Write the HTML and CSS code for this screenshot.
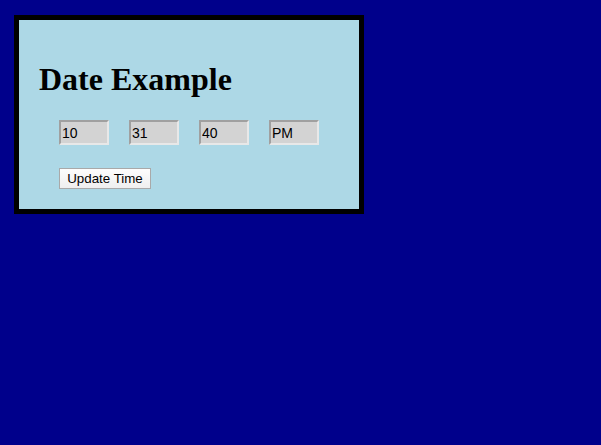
FILE: index.html
```html
<!DOCTYPE html>
<html>
<head>
<meta charset="utf-8">
<link rel="stylesheet" href="styles.css">
</head>
<body>
<div class="box">
  <h1 class="title">Date Example</h1>
  <div class="fields">
    <input class="field" type="text" value="10">
    <input class="field" type="text" value="31">
    <input class="field" type="text" value="40">
    <input class="field" type="text" value="PM">
  </div>
  <div class="actions">
    <button class="btn" type="button">Update Time</button>
  </div>
</div>
</body>
</html>
```
FILE: styles.css
```css
html, body {
  margin: 0;
  padding: 0;
  background: #00008b;
  height: 100%;
}
body {
  padding: 15px 0 0 14px;
  box-sizing: border-box;
}
.box {
  width: 320px;
  height: 189px;
  border: 5px solid #000;
  background: #add8e6;
  padding: 0 0 0 20px;
  box-sizing: content-box;
  display: flex;
  flex-direction: column;
  align-items: flex-start;
}
.title {
  font-family: "Liberation Serif", "Times New Roman", serif;
  font-size: 32px;
  font-weight: bold;
  line-height: 37px;
  margin: 41px 0 0 0;
  color: #000;
}
.fields {
  display: flex;
  gap: 20px;
  margin: 22px 0 0 20px;
}
.field {
  width: 50px;
  height: 25px;
  box-sizing: border-box;
  margin: 0;
  padding: 0 1px;
  border-width: 2px;
  border-style: solid;
  border-color: #a0a0a0 #e8e8e8 #e8e8e8 #a0a0a0;
  background: #d3d3d3;
  font-family: "Liberation Sans", Arial, sans-serif;
  font-size: 14px;
  color: #000;
}
.actions {
  margin: 23px 0 0 20px;
}
.btn {
  width: 92px;
  height: 21px;
  box-sizing: border-box;
  margin: 0;
  padding: 0;
  border: 1px solid #a9a9a9;
  border-radius: 0;
  background: linear-gradient(#fdfdfd, #efefef);
  font-family: "Liberation Sans", Arial, sans-serif;
  font-size: 13.33px;
  color: #000;
}
```
